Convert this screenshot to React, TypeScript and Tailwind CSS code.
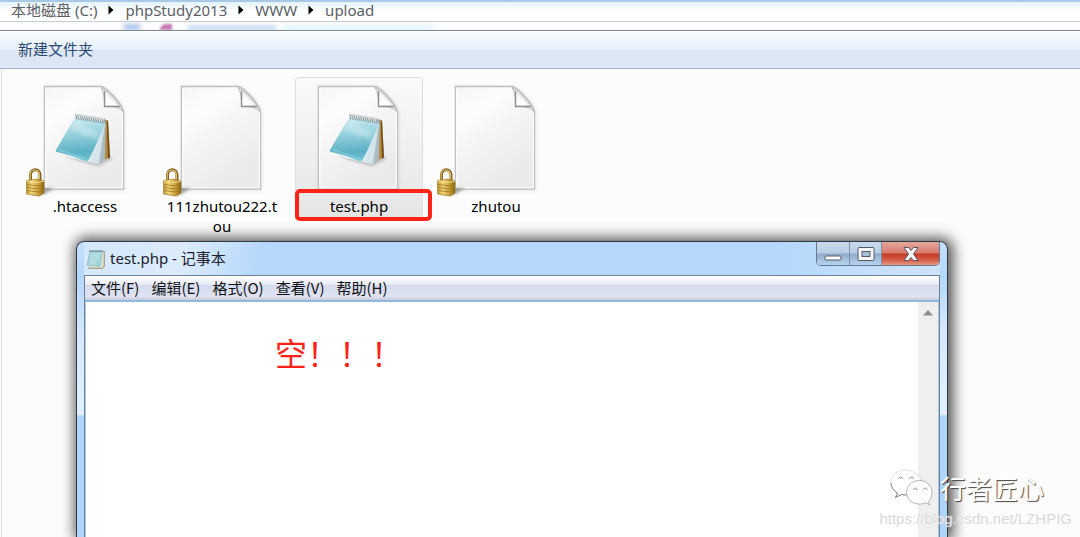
import React from "react";

const crumbs = ["本地磁盘 (C:)", "phpStudy2013", "WWW", "upload"];
const menus = ["文件(F)", "编辑(E)", "格式(O)", "查看(V)", "帮助(H)"];

type FileEntry = { name: string; notepad?: boolean; locked?: boolean; selected?: boolean };

const files: FileEntry[] = [
  { name: ".htaccess", notepad: true, locked: true },
  { name: "111zhutou222.tou", locked: true },
  { name: "test.php", notepad: true, selected: true },
  { name: "zhutou", locked: true },
];

function Gradients() {
  return (
    <svg width="0" height="0" className="absolute" aria-hidden="true">
      <defs>
        <linearGradient id="page" x1="0" y1="0" x2="0.5" y2="1">
          <stop offset="0" stopColor="#f6f6f6" />
          <stop offset="0.3" stopColor="#fdfdfd" />
          <stop offset="0.5" stopColor="#f6f6f6" />
          <stop offset="1" stopColor="#eaeaea" />
        </linearGradient>
        <linearGradient id="fold" x1="0" y1="1" x2="1" y2="0">
          <stop offset="0" stopColor="#ffffff" />
          <stop offset="0.5" stopColor="#ececec" />
          <stop offset="1" stopColor="#bcbcbc" />
        </linearGradient>
        <linearGradient id="teal" x1="0.4" y1="0" x2="0.5" y2="1">
          <stop offset="0" stopColor="#cdebf1" />
          <stop offset="0.4" stopColor="#93d0dc" />
          <stop offset="0.8" stopColor="#5bb0c5" />
          <stop offset="1" stopColor="#6fc3d2" />
        </linearGradient>
        <linearGradient id="sheets" x1="0" y1="0" x2="1" y2="0">
          <stop offset="0" stopColor="#f3f7f9" />
          <stop offset="0.75" stopColor="#d8e6ec" />
          <stop offset="1" stopColor="#a9bcc6" />
        </linearGradient>
        <linearGradient id="brass" x1="0" y1="0" x2="1" y2="0">
          <stop offset="0" stopColor="#c59a32" />
          <stop offset="0.3" stopColor="#f0d67b" />
          <stop offset="0.65" stopColor="#d0a43c" />
          <stop offset="1" stopColor="#8d6514" />
        </linearGradient>
        <filter id="soft" x="-50%" y="-50%" width="200%" height="200%">
          <feGaussianBlur stdDeviation="1.5" />
        </filter>
      </defs>
    </svg>
  );
}

function FileIcon({ notepad, locked }: { notepad?: boolean; locked?: boolean }) {
  return (
    <svg viewBox="0 0 128 120" className="block h-[120px] w-32" aria-hidden="true">
      <path d="M24 10H80C86 11 102 27 103 35V112.500H24Z" fill="none" stroke="#999" strokeOpacity="0.3" strokeWidth="2" filter="url(#soft)" />
      <path d="M23.500 9.500H80C86 11 101 26 102.500 35V112H23.500Z" fill="url(#page)" stroke="#c0c0c0" strokeWidth="1.300" />
      <path d="M24.800 11V110.800H101.300V36" fill="none" stroke="#fff" strokeWidth="1" />
      <path d="M80 10.500C83 15 83.500 22 83.500 29.500C90 29 98 30 102 34.500C99 26 87 14 80 10.500Z" fill="url(#fold)" stroke="#b0b0b0" strokeWidth="0.800" />
      <path d="M83.500 14V29.500H99" fill="none" stroke="#8f8f8f" strokeWidth="1.300" />
      <path d="M85.300 17V27.800H96Z" fill="#fff" fillOpacity="0.85" />
      {notepad && (
        <g>
          <path d="M48 81L77 89L91 82L88 78Z" fill="#777" opacity="0.45" filter="url(#soft)" />
          <path d="M84 42.500L87 43.500L89 80.500L82.500 83Z" fill="#b58a3d" />
          <path d="M85.800 44L87 43.500L89 80.500L87 81.500Z" fill="#70501c" />
          <path d="M83 43L84.500 44L83.500 82.500L77.700 87.500L46 80.300L47 76Z" fill="url(#sheets)" stroke="#b7c3c8" strokeWidth="0.500" />
          <path d="M84 46L69 83L77.500 86.500L84 47" fill="#d9e9ef" />
          <path d="M84 47L72.500 84M84.500 47L76 85.500" stroke="#b9d0d9" strokeWidth="0.500" />
          <path d="M84.500 46L83.500 82.300L78 87Z" fill="#a4b6bf" opacity="0.75" />
          <path d="M54.500 40L84 44.500C80 57 73 73 67.500 83Q66 84.500 63 83.500C54 80 43 76 35.500 75Q34.500 74.500 35 73C41 63 48 50 54.500 40Z" fill="url(#teal)" />
          <path d="M54.500 42L77 55L65 61L48 52Z" fill="#fff" opacity="0.16" filter="url(#soft)" />
          <path d="M50 48L75 64L79 56Z" fill="#fff" opacity="0.2" filter="url(#soft)" />
          <path d="M35.500 73L40 72L65 81L67 83Q65 84.500 62 83Z" fill="#99dae3" opacity="0.4" />
          {[0, 1, 2, 3, 4, 5, 6, 7, 8, 9, 10, 11, 12, 13].map((i) => (
            <path key={i} d={`M${54.5 + i * 2.2} ${37.5 + i * 0.35}L${56 + i * 2.2} ${42.5 + i * 0.35}`} stroke="#8f9a9d" strokeWidth="1.100" />
          ))}
          <path d="M54.500 37L84 41.500" stroke="#c9d0d2" strokeWidth="0.800" />
        </g>
      )}
      {locked && (
        <g>
          <path d="M20 111L33 111L24 117L10 118Z" fill="#555" opacity="0.5" filter="url(#soft)" />
          <path d="M9.500 105V98C9.500 91 19 91 19 98V106" fill="none" stroke="#80601f" strokeWidth="3" />
          <path d="M9.200 105V98C9.200 91.300 18.500 91.300 18.500 98V105" fill="none" stroke="#e2c268" strokeWidth="1.200" />
          <path d="M5.500 103.500L16 102L23 104V116L18.500 119L5.500 117Z" fill="url(#brass)" stroke="#96701f" strokeWidth="0.600" />
          <path d="M5.500 104L17.500 105.500L23 104" fill="none" stroke="#f8e8a1" strokeWidth="0.900" />
          <path d="M6 107.500L18 109L23 107M6 110.500L18 112L23 110M6 113.500L18 115L23 113" fill="none" stroke="#9c7521" strokeWidth="0.800" />
        </g>
      )}
    </svg>
  );
}

function NotepadGlyph() {
  return (
    <svg viewBox="0 0 20 20" className="h-5 w-5" aria-hidden="true">
      <path d="M4 2.500L18.500 2.500V17L16.500 19.500H3Z" fill="#d6cda9" stroke="#8f8e79" strokeWidth="0.700" />
      <path d="M4 2L17 3L16 18L2 17.500Z" fill="#f4f8f8" />
      <path d="M4 2H16.500L14.500 17.500L1 16.500Z" fill="#9fd3da" stroke="#86b5bb" strokeWidth="0.600" />
      <path d="M5 4L15 4L9 16L3 16Z" fill="#fff" opacity="0.2" />
      <path d="M4 1V3M6 1V3M8 1V3M10 1V3M12 1V3M14 1V3M16 1V3" stroke="#67777b" strokeWidth="0.900" />
    </svg>
  );
}

function CaptionButtons() {
  return (
    <div className="flex h-6 overflow-hidden rounded-b-[5px] border border-t-0 border-[#65788f]">
      <button aria-label="Minimize" className="flex w-[33px] items-end justify-center border-r border-[#7990aa] bg-[linear-gradient(#c9daeb_0%,#b8cde3_48%,#8fabc9_52%,#b8d4f0_100%)] pb-1">
        <svg viewBox="0 0 18 6" className="h-1.5 w-[18px]" aria-hidden="true">
          <rect x="1" y="1" width="16" height="4" rx="1" fill="#fff" stroke="#535a6b" />
        </svg>
      </button>
      <button aria-label="Maximize" className="flex w-8 items-center justify-center border-r border-[#7990aa] bg-[linear-gradient(#c9daeb_0%,#b8cde3_48%,#8fabc9_52%,#b8d4f0_100%)]">
        <svg viewBox="0 0 18 14" className="h-3.5 w-[18px]" aria-hidden="true">
          <rect x="1" y="0.500" width="16" height="13" rx="1" fill="#f7f7f7" stroke="#535a6b" />
          <rect x="5" y="4.500" width="8" height="5" fill="#a9c0da" stroke="#535a6b" />
        </svg>
      </button>
      <button aria-label="Close" className="flex w-[57px] items-center justify-center bg-[linear-gradient(#e5a79d_0%,#d87b6c_48%,#c23a22_52%,#d7604a_80%,#e59b83_100%)]">
        <svg viewBox="0 0 16 14" className="h-3.5 w-4" aria-hidden="true">
          <path d="M1 0.500H5.500L8 3.500L10.500 0.500H15L10.500 7L15 13.500H10.500L8 10.500L5.500 13.500H1L5.500 7Z" fill="#f8f8f8" stroke="#555566" strokeLinejoin="round" />
        </svg>
      </button>
    </div>
  );
}

function WeChatMark() {
  return (
    <svg viewBox="0 0 44 38" className="h-[38px] w-11 overflow-visible" aria-hidden="true">
      <g fill="#fff" stroke="#8a8a8a" strokeWidth="0.800" fillOpacity="0.94">
        <path d="M15 1C6.500 1 1 7 1 13.500C1 18 3.500 21.500 7.500 24L5.500 28.500L11.500 25.500C22 28 31 22 31 13.500C31 6.500 24 1 15 1Z" strokeOpacity="0.35" />
        <path d="M29.500 11.500C22 11.500 16.500 17 16.500 23.500C16.500 30.500 23 35.500 30.500 35C33 35 34.500 34 36 33.500L39.500 36L38.500 32.500C41 30 42 27 42 23.500C42 16.500 36.500 11.500 29.500 11.500Z" strokeOpacity="0.8" />
      </g>
      <path d="M1 14C1 18 3.500 21.500 7.500 24L5.500 28.500L11.500 25.500L16 26" fill="none" stroke="#777" strokeWidth="0.900" />
      <g fill="none" stroke="#8a8a8a" strokeWidth="1">
        <path d="M8.500 10C8.500 7.500 12.500 7.500 12.500 10M19.500 10C19.500 7.500 23.500 7.500 23.500 10M23.500 21C23.500 18.500 27 18.500 27 21M33.500 21C33.500 18.500 37 18.500 37 21" />
      </g>
    </svg>
  );
}

function Notepad() {
  return (
    <section
      aria-label="test.php - 记事本"
      className="absolute top-[241px] right-[132px] bottom-0 left-[76px] flex flex-col rounded-t-[8px] border border-b-0 border-[#303844] bg-[linear-gradient(#c6e0fc_0px,#b4d7fb_34px,#d5e8fc_90px,#e3effc_172px,#b1d4fa_174px)] px-[7px] shadow-[2px_0_14px_3px_rgba(0,0,0,0.7)]"
    >
      <header className="flex h-[33px] shrink-0 items-start justify-between bg-[linear-gradient(100deg,#d6e8fd_0px,#dcebfc_100px,#b4d7fb_180px,#b4d7fb_80%,#cfe4fc_100%)]">
        <h1 className="flex h-[33px] items-center gap-1 pl-0.5 text-[15px] text-[#18202a]">
          <NotepadGlyph />
          <span>test.php - 记事本</span>
        </h1>
        <CaptionButtons />
      </header>
      <div className="flex min-h-0 grow flex-col border border-b-0 border-[#6f8195] bg-white">
        <nav className="flex h-[26px] shrink-0 items-center gap-3 border-b-2 border-[#90b9dc] bg-[linear-gradient(#ffffff_0%,#e9ecf6_35%,#d5dbee_38%,#dfe3f3_85%,#c6cad8_100%)] px-1.5 font-['Noto_Sans_CJK_SC',sans-serif] text-[15px] text-[#111]">
          {menus.map((m) => (
            <button key={m} className="leading-5">{m}</button>
          ))}
        </nav>
        <div className="flex min-h-0 grow border-x border-[#a8c8e4]">
          <textarea aria-label="test.php" className="min-w-0 grow resize-none bg-white p-1 outline-none" />
          <div className="flex w-5 justify-center bg-[#efefef] pt-2">
            <button aria-label="Scroll up" className="h-1.5 w-2.5">
              <svg viewBox="0 0 10 6" className="block h-1.5 w-2.5" aria-hidden="true">
                <path d="M5 0L10 5.500H0Z" fill="#8b8b8b" />
              </svg>
            </button>
          </div>
        </div>
      </div>
    </section>
  );
}

export default function App() {
  return (
    <main className="relative flex min-h-screen flex-col overflow-hidden bg-[#fcfcfc] font-['Noto_Sans','Noto_Sans_CJK_SC',sans-serif]">
      <Gradients />
      <nav className="flex h-[22px] items-center overflow-hidden border-t-2 border-b border-t-[#a9c8e6] border-b-[#c6cbd0] bg-[linear-gradient(#e3f3f9,#ffffff_50%)] pb-1 pl-[11px] text-[15px] leading-4 text-[#5c6065]">
        {crumbs.map((c, i) => (
          <React.Fragment key={c}>
            {i > 0 && (
              <svg viewBox="0 0 6 10" className="mx-[11px] h-2.5 w-1.5" aria-hidden="true">
                <path d="M0.500 0.500L5.500 5L0.500 9.500Z" fill="#000" />
              </svg>
            )}
            <a href="#">{c}</a>
          </React.Fragment>
        ))}
      </nav>
      <div className="flex h-2 items-end overflow-hidden bg-[#fafcfd] pl-[124px]">
        <div className="h-1.5 w-4 bg-[#a9c3e9] blur-[2px]" />
        <div className="ml-5 h-1.5 w-3 rounded-tl-full bg-[#c979b1] blur-[1px]" />
        <div className="ml-4 h-1 w-[88px] bg-[#b7d3ef] blur-[2px]" />
        <div className="ml-2 h-1 w-[148px] bg-[#d9f1fc] blur-[2px]" />
      </div>
      <div className="flex h-[39px] items-center border-t border-b border-t-[#7f8790] border-b-[#a0b3cf] bg-[linear-gradient(#ffffff_0%,#f3f8fe_12%,#e8f0fa_48%,#dce6f4_52%,#dce6f4_88%,#e3ebf7_100%)] pl-[18px]">
        <button className="text-[15px] text-[#294a73]">新建文件夹</button>
      </div>
      <ul className="ml-px flex grow gap-[9px] border-l border-[#d8e2f1] pt-2 pl-[19px]">
        {files.map((f) => (
          <li key={f.name} className="relative w-32">
            <button
              className={
                f.selected
                  ? "flex w-32 flex-col items-center rounded-[3px] border border-[#dedede] bg-[linear-gradient(#f9fafa,#e5e5e5)] pb-1"
                  : "flex w-32 flex-col items-center border border-transparent pb-1"
              }
            >
              <span className="-my-px"><FileIcon notepad={f.notepad} locked={f.locked} /></span>
              <span className="w-[116px] text-center text-[15px] leading-5 break-all text-black">{f.name}</span>
            </button>
            {f.selected && (
              <div className="absolute top-[112px] left-0 h-8 w-[137px] rounded-[5px] border-4 border-[#fb2417]" />
            )}
          </li>
        ))}
      </ul>
      <Notepad />
      <p className="absolute top-[330px] left-[275px] font-['Noto_Sans_CJK_SC',sans-serif] text-[32px] leading-[44px] text-[#fb2417]">空！！！</p>
      <aside className="absolute right-2 bottom-2 flex flex-col items-end gap-0.5">
        <div className="mr-7 flex items-center gap-[6px]">
          <WeChatMark />
          <span className="font-['Noto_Sans_CJK_SC',sans-serif] text-[26px] leading-[38px] text-white [text-shadow:1px_1px_1px_#444]">行者匠心</span>
        </div>
        <span className="font-['Liberation_Sans',sans-serif] text-[15px] leading-5 text-[#d9d9d9] [text-shadow:0_0_1px_#fff]">https://blog.csdn.net/LZHPIG</span>
      </aside>
    </main>
  );
}
